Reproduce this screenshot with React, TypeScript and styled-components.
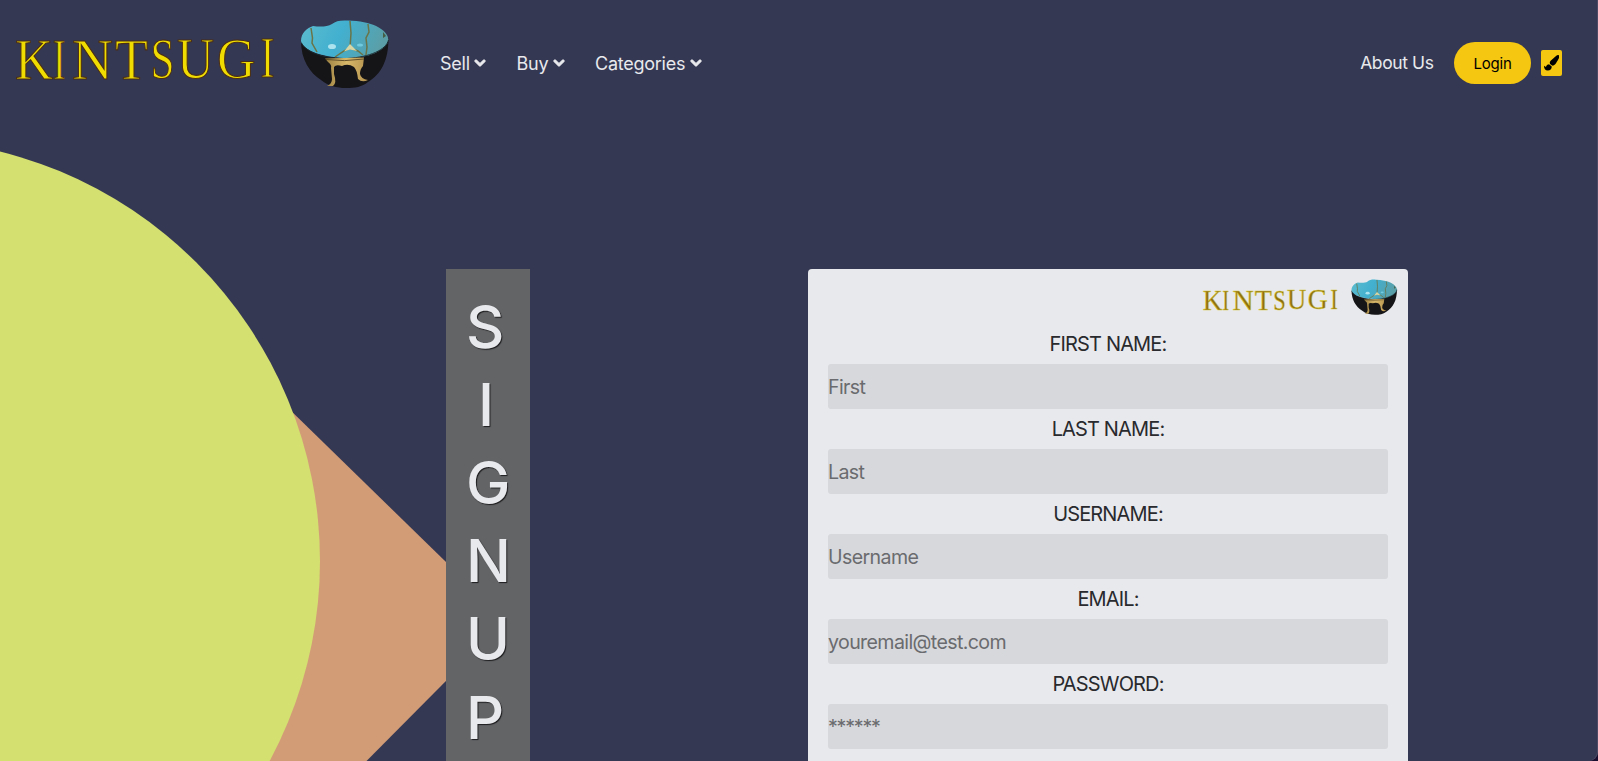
import React from "react";
import styled, { createGlobalStyle } from "styled-components";
import { FaChevronDown, FaPaintBrush } from "react-icons/fa";

const GlobalStyle = createGlobalStyle`
  * { box-sizing: border-box; }
  body {
    margin: 0;
    background: #1b0f30;
    font-family: Inter, "Liberation Sans", sans-serif;
    overflow: hidden;
  }
`;

const Page = styled.div`
  position: relative;
  height: 761px;
  overflow: hidden;
  border-bottom-right-radius: 9px;
  box-shadow: inset -1px 0 0 #4b4963;
  background: #353853;
`;

const Backdrop = styled.svg`
  position: absolute;
  inset: 0;
  width: 530px;
  height: 761px;
`;

const Header = styled.header`
  position: relative;
  display: flex;
  align-items: flex-start;
  height: 110px;
  padding-right: 36px;
`;

const LogoArt = styled.svg<{ $width: number }>`
  display: block;
  flex: none;
  width: ${(p) => p.$width}px;
  height: ${(p) => p.$width * 0.275}px;
`;

const Menu = styled.nav`
  display: flex;
  gap: 29.5px;
  padding: 50px 0 0 40px;
`;

const MenuItem = styled.a<{ $width: number }>`
  display: flex;
  align-items: center;
  justify-content: space-between;
  width: ${(p) => p.$width}px;
  height: 27px;
  color: #e8e9ec;
  font-size: 18px;
  letter-spacing: -0.25px;
  white-space: nowrap;
  svg {
    width: 12px;
    height: 12px;
    margin: -1px 1px 0 0;
    overflow: visible;
    stroke: currentColor;
    stroke-width: 48px;
    stroke-linejoin: round;
  }
`;

const Actions = styled.div`
  display: flex;
  align-items: center;
  height: 42px;
  margin: 42px 0 0 auto;
`;

const AboutLink = styled.a`
  margin: -1px 20.5px 0 0;
  color: #e8e9ec;
  font-size: 17.5px;
  letter-spacing: -0.4px;
`;

const LoginButton = styled.button`
  width: 77px;
  height: 42px;
  padding: 1px 0 0;
  border: 0;
  border-radius: 21px;
  background: #f5c711;
  color: #000;
  font: 15px Inter, sans-serif;
  letter-spacing: -0.2px;
`;

const ThemeButton = styled.button`
  display: flex;
  align-items: center;
  justify-content: center;
  width: 21px;
  height: 26px;
  margin-left: 10px;
  padding: 0;
  border: 0;
  border-radius: 2px;
  background: #f5c711;
  color: #000;
  svg { width: 15.5px; height: 15.5px; }
`;

const Main = styled.main`
  position: relative;
  display: flex;
  align-items: flex-start;
  gap: 278px;
  padding: 159px 0 0 446px;
`;

const Banner = styled.h1`
  display: flex;
  flex-direction: column;
  width: 84px;
  height: 560px;
  margin: 0;
  padding: 17.5px 0 0 20px;
  background: #636466;
  color: #e8e9ec;
  font-size: 59.5px;
  font-weight: 500;
  line-height: 78.2px;
  text-shadow: 1px 1px 1px #1c1c1e;
`;

const Letter = styled.span<{ $indent?: number }>`
  padding-left: ${(p) => p.$indent ?? 0}px;
`;

const Card = styled.form`
  display: flex;
  flex-direction: column;
  width: 600px;
  height: 640px;
  padding: 0 20px;
  border-radius: 4px;
  background: #e8e9ec;
`;

const CardLogo = styled.div`
  display: flex;
  justify-content: flex-end;
  height: 55px;
  margin-right: -15px;
`;

const Label = styled.label`
  height: 40px;
  color: #292a2d;
  font-size: 20px;
  line-height: 41px;
  letter-spacing: -0.85px;
  text-align: center;
`;

const Input = styled.input<{ $track: number }>`
  width: 100%;
  height: 45px;
  padding: 0;
  border: 0;
  border-radius: 3px;
  background: #d7d8dc;
  font: 19.6px Inter, sans-serif;
  letter-spacing: ${(p) => p.$track}px;
  &::placeholder { color: #6a6b6e; opacity: 1; }
`;

const glyphs = [
  { char: "K", x: 15, y: 79, width: 38 },
  { char: "I", x: 53, y: 79, width: 12.5 },
  { char: "N", x: 72, y: 78.5, width: 41 },
  { char: "T", x: 115, y: 78.5, width: 33 },
  { char: "S", x: 150.5, y: 78, width: 24 },
  { char: "U", x: 177, y: 77.5, width: 37 },
  { char: "G", x: 217, y: 77.5, width: 38.5 },
  { char: "I", x: 260.5, y: 77, width: 14 },
];

function Logo({ width, id, small }: { width: number; id: string; small?: boolean }) {
  return (
    <LogoArt $width={width} viewBox="0 0 400 110">
      <defs>
        <linearGradient id={`${id}-glaze`} x1="0" x2="1" y1="0" y2="0.2">
          <stop offset="0" stopColor="#5dbccd" />
          <stop offset="0.5" stopColor="#42b0d0" />
          <stop offset="1" stopColor="#5a9fa8" />
        </linearGradient>
        <linearGradient id={`${id}-gold`} x1="0" x2="1" y1="0" y2="0">
          <stop offset="0" stopColor="#9b8142" />
          <stop offset="0.5" stopColor="#d8b869" />
          <stop offset="1" stopColor="#b3924e" />
        </linearGradient>
      </defs>
      <g
        fontFamily="'Liberation Serif', serif"
        fontSize="56"
        fill={small ? "#8f7010" : "#f0dc00"}
        stroke={small ? "#d8cb3c" : "#4a2e16"}
        strokeWidth={small ? 1 : 1.1}
      >
        {glyphs.map((g, i) => (
          <text key={i} x={g.x} y={g.y} textLength={g.width} lengthAdjust="spacingAndGlyphs">{g.char}</text>
        ))}
      </g>
      <path d="M301 41C301 60 310 73 321 80C328 86 337 88 346 88C355 88 362 87 368 82C381 74 388.500 61 388.500 38L372 53Q340 64 310 51Z" fill="#151416" />
      <path d="M301 41C301 33 307 28 313 26C320 27 327 27 332 24C336 21 340 20 348 20.500C371 21 388 29 388.500 40C387 49 373 56 357 57.500C335 60 303 53 301 41Z" fill={`url(#${id}-glaze)`} />
      <path d="M301.500 43C307 54 329 59 347 58.500C370 57 386 50 388.500 40" fill="none" stroke="#1b2b31" strokeWidth="1" />
      <g fill="none" stroke="#6a7447" strokeWidth="1.5">
        <path d="M311 28L312.500 38L312 43L317 52" />
        <path d="M350 21L351 33L350 48L344 51L335 57M350 48L358 51L363 55" />
        <path d="M368 24L369 32L366 38L367 47L366 55" />
      </g>
      <path d="M344 51.500L350 44L357 51L350 49.500Z" fill="#d8d6a5" />
      <ellipse cx="332" cy="46.500" rx="4" ry="2.600" fill="#abe2ee" />
      <ellipse cx="360" cy="45" rx="3" ry="1.600" fill="#72cade" />
      <path d="M383 32L386 36L383 38Z" fill="#465d45" />
      <path d="M325 58.500L364 57.500L363 66Q360 69 360 74Q361 79 368 80Q362 83 358 79Q357 70 354 67Q348 63 342 66Q336 64 334 67L334 74Q337 83 333 86L327 86Q332 84 332 79L331 68Q332 65 328 62Z" fill={`url(#${id}-gold)`} />
      <path d="M326 59.500Q344 62 364 59" fill="none" stroke="#49381d" strokeWidth="0.8" />
    </LogoArt>
  );
}

const menu = [
  { label: "Sell", width: 47 },
  { label: "Buy", width: 49 },
  { label: "Categories", width: 108 },
];

const fields = [
  { label: "FIRST NAME:", hint: "First" },
  { label: "LAST NAME:", hint: "Last" },
  { label: "USERNAME:", hint: "Username" },
  { label: "EMAIL:", hint: "youremail@test.com" },
  { label: "PASSWORD:", hint: "******", track: -1.2 },
];

export default function App() {
  return (
    <Page>
      <GlobalStyle />
      <Backdrop viewBox="0 0 530 761">
        <path d="M285 405L506 620.500L300 828L200 828V405Z" fill="#d29c77" />
        <circle cx="-102" cy="561" r="422" fill="#d4e070" />
      </Backdrop>
      <Header>
        <Logo width={400} id="header" />
        <Menu>
          {menu.map((m) => (
            <MenuItem key={m.label} $width={m.width}>{m.label}<FaChevronDown /></MenuItem>
          ))}
        </Menu>
        <Actions>
          <AboutLink>About Us</AboutLink>
          <LoginButton>Login</LoginButton>
          <ThemeButton aria-label="Theme"><FaPaintBrush /></ThemeButton>
        </Actions>
      </Header>
      <Main>
        <Banner>
          {"SIGNUP".split("").map((c) => (
            <Letter key={c} $indent={c === "I" ? 12 : 0}>{c}</Letter>
          ))}
        </Banner>
        <Card>
          <CardLogo><Logo width={208} id="card" small /></CardLogo>
          {fields.map((f) => (
            <React.Fragment key={f.label}>
              <Label>{f.label}</Label>
              <Input placeholder={f.hint} $track={f.track ?? -0.62} />
            </React.Fragment>
          ))}
        </Card>
      </Main>
    </Page>
  );
}
